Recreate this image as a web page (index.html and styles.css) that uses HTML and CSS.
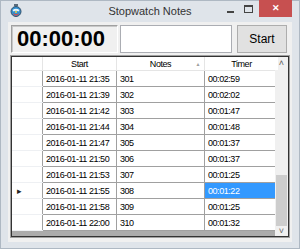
FILE: index.html
```html
<!DOCTYPE html>
<html lang="en">
<head>
    <title>Stopwatch Notes</title>
    <link rel="stylesheet" href="styles.css">
</head>
<body>
<div class="window">
    <div class="titlebar">
        <svg class="app-icon" width="12" height="13" viewBox="0 0 12 13">
            <rect x="4" y="0" width="4" height="2" fill="#5a6b7a"/>
            <circle cx="6" cy="7.5" r="5" fill="#2f8fd0" stroke="#35506a" stroke-width="1"/>
            <path d="M2.5 6 Q6 3.5 9.5 6 L8.5 7.5 Q6 6 3.5 7.5 Z" fill="#e8f4fb"/>
            <path d="M3 9 Q6 11.5 9 9 L8 11 Q6 12 4 11 Z" fill="#d84a4a"/>
            <circle cx="6" cy="8" r="1" fill="#f4d23c"/>
        </svg>
        <div class="title">Stopwatch Notes</div>
        <div class="caption-buttons">
            <span class="btn-min"></span>
            <span class="btn-max"></span>
            <span class="btn-close">&#x2715;</span>
        </div>
    </div>
    <div class="client">
        <div class="controls">
            <div class="timer">00:00:00</div>
            <div class="note-input"></div>
            <div class="start-btn">Start</div>
        </div>
        <div class="grid">
            <div class="grid-inner">
                <div class="table-area">
                    <table>
                        <thead>
                            <tr>
                                <th class="row-head"></th>
                                <th class="col-start">Start</th>
                                <th class="col-notes">Notes<span class="sort">&#9650;</span></th>
                                <th class="col-timer">Timer</th>
                            </tr>
                        </thead>
                        <tbody id="rows"></tbody>
                    </table>
                </div>
                <div class="scrollbar">
                    <div class="arrow up">&#x2C4;</div>
                    <div class="track"><div class="thumb"></div></div>
                    <div class="arrow down">&#x2C5;</div>
                </div>
            </div>
        </div>
    </div>
</div>
<script>
    const notes = [
        ["2016-01-11 21:35", "301", "00:02:59"],
        ["2016-01-11 21:39", "302", "00:02:02"],
        ["2016-01-11 21:42", "303", "00:01:47"],
        ["2016-01-11 21:44", "304", "00:01:48"],
        ["2016-01-11 21:47", "305", "00:01:37"],
        ["2016-01-11 21:50", "306", "00:01:37"],
        ["2016-01-11 21:53", "307", "00:01:25"],
        ["2016-01-11 21:55", "308", "00:01:22"],
        ["2016-01-11 21:58", "309", "00:01:25"],
        ["2016-01-11 22:00", "310", "00:01:32"]
    ];

    const body = document.getElementById('rows');
    notes.forEach((note, i) => {
        const tr = document.createElement('tr');
        const current = i === 7;

        const head = document.createElement('td');
        head.className = 'row-head';
        if (current) head.textContent = '\u25B8';
        tr.append(head);

        note.forEach((value, col) => {
            const td = document.createElement('td');
            td.textContent = value;
            if (current && col === 2) td.className = 'selected';
            tr.append(td);
        });

        body.append(tr);
    });
</script>
</body>
</html>
```

FILE: styles.css
```css
body{
    margin: 0;
    width: 300px;
    height: 249px;
    overflow: hidden;
    background: #dfe4ea;
    font-family: "Liberation Sans", Arial, sans-serif;
}
.window{
    height: 249px;
    box-sizing: border-box;
    border: 1px solid #aeb8c3;
    display: flex;
    flex-direction: column;
}
.titlebar{
    height: 21px;
    display: flex;
    align-items: center;
    position: relative;
}
.app-icon{
    margin-left: 9px;
    margin-top: -2px;
}
.title{
    position: absolute;
    left: 0;
    right: 0;
    top: 4px;
    text-align: center;
    font-size: 11px;
    color: #333;
}
.caption-buttons{
    position: absolute;
    right: 7px;
    top: -1px;
    display: flex;
    align-items: flex-start;
}
.btn-min{
    width: 7px;
    height: 2px;
    background: #444;
    margin-top: 11px;
    margin-right: 10px;
}
.btn-max{
    width: 7px;
    height: 5px;
    border: 1px solid #444;
    border-top-width: 2px;
    margin-top: 5px;
    margin-right: 6px;
}
.btn-close{
    width: 33px;
    height: 17px;
    background: #c75050;
    color: white;
    font-size: 9px;
    font-weight: bold;
    text-align: center;
    line-height: 17px;
}
.client{
    flex: 1;
    margin: 0 7px 6px 7px;
    background: #f0f0f0;
    padding: 3px 3px 0 2px;
    display: flex;
    flex-direction: column;
}
.controls{
    display: flex;
    height: 28px;
    padding-left: 1px;
}
.timer{
    width: 107px;
    box-sizing: border-box;
    border: 1px solid #a0a0a0;
    border-right-color: #fff;
    border-bottom-color: #fff;
    box-shadow: inset 1px 1px 0 #c8c8c8;
    font-size: 22px;
    font-weight: bold;
    line-height: 26px;
    padding-left: 5px;
    color: #000;
}
.note-input{
    width: 112px;
    margin-left: 2px;
    box-sizing: border-box;
    border: 1px solid #abadb3;
    background: #fff;
}
.start-btn{
    width: 50px;
    margin-left: 5px;
    box-sizing: border-box;
    border: 1px solid #adadad;
    background: #e1e1e1;
    font-size: 12px;
    text-align: center;
    line-height: 26px;
    color: #000;
}
.grid{
    margin-top: 2px;
    width: 280px;
    height: 183px;
    box-sizing: border-box;
    border: 1px solid #a0a0a0;
}
.grid-inner{
    height: 100%;
    box-sizing: border-box;
    border: 1px solid #333;
    display: flex;
    background: #ababab;
}
.table-area{
    width: 263px;
}
table{
    border-collapse: collapse;
    table-layout: fixed;
    width: 263px;
    font-size: 9px;
    letter-spacing: -0.45px;
    color: #000;
}
th{
    height: 13px;
    padding: 0;
    background: #fff;
    font-weight: normal;
    text-align: center;
    border-right: 1px solid #e5e5e5;
    border-bottom: 1px solid #e5e5e5;
    position: relative;
}
th.row-head{
    width: 30px;
}
th.col-start{
    width: 73px;
}
th.col-notes{
    width: 87px;
}
th.col-timer{
    width: 73px;
}
.sort{
    position: absolute;
    right: 4px;
    top: 4px;
    font-size: 5px;
    color: #a0a0a0;
}
td{
    height: 15px;
    padding: 0 0 0 3px;
    background: #fff;
    border: 1px solid #a0a0a0;
    white-space: nowrap;
    overflow: hidden;
}
td.row-head{
    border-top: 1px solid #eef0f3;
    border-bottom: 1px solid #eef0f3;
    border-left: none;
    padding-left: 5px;
    font-size: 9px;
    color: #222;
}
tr:first-child td{
    border-top: none;
}
td.selected{
    background: #3399ff;
    color: #fff;
}
.scrollbar{
    width: 13px;
    background: #f0f0f0;
    display: flex;
    flex-direction: column;
}
.arrow{
    height: 13px;
    text-align: center;
    font-size: 9px;
    line-height: 13px;
    color: #606060;
}
.arrow.down{
    height: 10px;
    line-height: 10px;
}
.track{
    flex: 1;
    display: flex;
    flex-direction: column;
    justify-content: flex-end;
    padding: 0 1px;
}
.thumb{
    height: 51px;
    background: #cdcdcd;
}
```
